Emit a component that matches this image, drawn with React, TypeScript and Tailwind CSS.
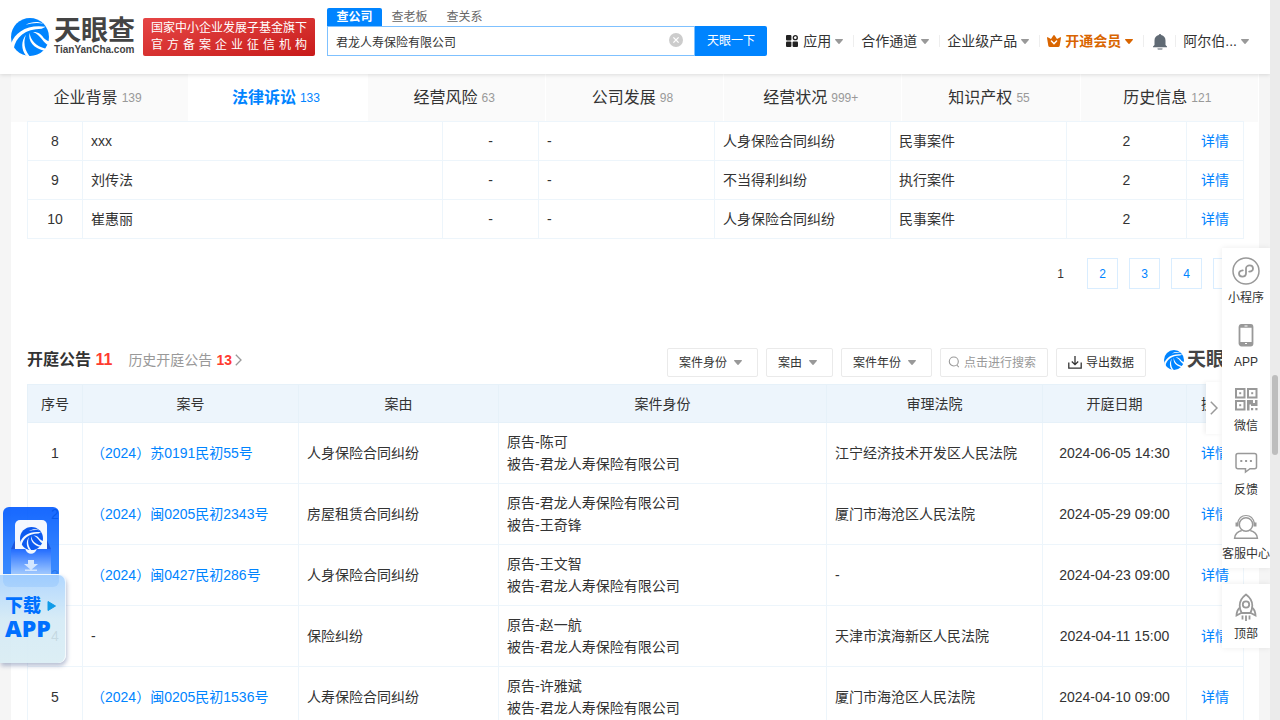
import type { ReactNode } from 'react';

import clsx from 'clsx';

const navTabs = [
  { label: '企业背景', count: '139' },
  { label: '法律诉讼', count: '133', active: true },
  { label: '经营风险', count: '63' },
  { label: '公司发展', count: '98' },
  { label: '经营状况', count: '999+' },
  { label: '知识产权', count: '55' },
  { label: '历史信息', count: '121' }
];

const caseRows = [
  { no: 8, name: 'xxx', reason: '人身保险合同纠纷', type: '民事案件', total: 2 },
  { no: 9, name: '刘传法', reason: '不当得利纠纷', type: '执行案件', total: 2 },
  { no: 10, name: '崔惠丽', reason: '人身保险合同纠纷', type: '民事案件', total: 2 }
];

const hearingHeads = ['序号', '案号', '案由', '案件身份', '审理法院', '开庭日期', '操作'];

const hearingRows = [
  {
    no: 1,
    caseNo: '（2024）苏0191民初55号',
    reason: '人身保险合同纠纷',
    parties: ['原告-陈可', '被告-君龙人寿保险有限公司'],
    court: '江宁经济技术开发区人民法院',
    date: '2024-06-05 14:30'
  },
  {
    no: 2,
    caseNo: '（2024）闽0205民初2343号',
    reason: '房屋租赁合同纠纷',
    parties: ['原告-君龙人寿保险有限公司', '被告-王奇锋'],
    court: '厦门市海沧区人民法院',
    date: '2024-05-29 09:00'
  },
  {
    no: 3,
    caseNo: '（2024）闽0427民初286号',
    reason: '人身保险合同纠纷',
    parties: ['原告-王文智', '被告-君龙人寿保险有限公司'],
    court: '-',
    date: '2024-04-23 09:00'
  },
  {
    no: 4,
    caseNo: '',
    reason: '保险纠纷',
    parties: ['原告-赵一航', '被告-君龙人寿保险有限公司'],
    court: '天津市滨海新区人民法院',
    date: '2024-04-11 15:00'
  },
  {
    no: 5,
    caseNo: '（2024）闽0205民初1536号',
    reason: '人寿保险合同纠纷',
    parties: ['原告-许雅斌', '被告-君龙人寿保险有限公司'],
    court: '厦门市海沧区人民法院',
    date: '2024-04-10 09:00'
  }
];

function Swirl({ className, disc = '#0084ff', streak = '#fff' }: { className?: string; disc?: string; streak?: string }) {
  return (
    <svg viewBox="0 0 114 114" className={className} aria-hidden="true">
      <circle cx="57" cy="57" r="57" fill={disc} />
      <g fill={streak}>
        <path d="M44 20C62 10 82 9 97 17C80 14 62 15 44 20Z" />
        <path d="M8 92C14 58 42 32 92 32L104 26C50 18 12 42 1 76Z" />
        <path d="M66 42C84 42 92 50 98 60C104 66 110 69 118 71L116 82C98 80 90 50 66 42Z" />
        <path d="M56 44C58 66 74 84 104 92L99 98C68 90 50 70 56 44Z" />
        <path d="M45 50C36 72 40 96 56 115L45 113C30 96 30 68 45 50Z" />
      </g>
    </svg>
  );
}

function Caret({ className }: { className?: string }) {
  return (
    <svg viewBox="0 0 8 5" className={clsx('h-[5px] w-2 flex-none', className)} fill="currentColor" aria-hidden="true">
      <path d="M.6 0h6.8c.5 0 .8.5.4.9L4.5 4.7a.7.7 0 0 1-1 0L.2.9C-.2.5.1 0 .6 0Z" />
    </svg>
  );
}

function NavItem({ children, last }: { children: ReactNode; last?: boolean }) {
  return (
    <li className="flex items-center">
      <a href="#" className="flex items-center gap-1 pl-[7px] whitespace-nowrap">
        {children}
      </a>
      {last ? null : <span className="ml-[10px] h-3 w-px bg-[#eee]" />}
    </li>
  );
}

function Header() {
  return (
    <header className="relative z-20 flex h-[74px] flex-none justify-between bg-white pr-[21px] pl-[11px] shadow-[0_1px_4px_rgba(0,0,0,0.12)]">
      <div className="flex">
        <a href="#" className="flex items-start gap-[5px] pt-[18px]">
          <Swirl className="h-[38px] w-[38px]" />
          <span className="block w-20 text-[#444]">
            <span className="block text-[27px] leading-[26px] font-bold whitespace-nowrap">天眼查</span>
            <span className="block text-[10px] leading-3 font-bold">TianYanCha.com</span>
          </span>
        </a>
        <div className="mt-[18px] ml-[9px] h-[38px] w-[172px] rounded-xs bg-linear-to-br from-[#e64545] to-[#c81919] px-2 pt-[2px] text-xs leading-[17px] whitespace-nowrap text-white">
          <p>国家中小企业发展子基金旗下</p>
          <p className="[text-align-last:justify]">官 方 备 案 企 业 征 信 机 构</p>
        </div>
        <form className="ml-3 pt-2 text-xs" onSubmit={(event) => event.preventDefault()}>
          <div className="flex h-[18px] leading-[18px] text-[#666]">
            <button type="button" className="w-[55px] rounded-t-xs bg-[#0084ff] font-bold text-white">
              查公司
            </button>
            <button type="button" className="w-[55px]">
              查老板
            </button>
            <button type="button" className="w-[55px]">
              查关系
            </button>
          </div>
          <div className="flex h-[30px]">
            <div className="relative w-[368px]">
              <input
                aria-label="查公司"
                defaultValue="君龙人寿保险有限公司"
                className="h-full w-full border border-[#7fc1ff] pr-8 pl-2 text-[#333] outline-none"
              />
              <svg viewBox="0 0 14 14" className="absolute top-[7px] right-3 h-[14px] w-[14px]" aria-hidden="true">
                <circle cx="7" cy="7" r="7" fill="#ccc" />
                <path d="m4.4 4.4 5.2 5.2m0-5.2L4.4 9.6" stroke="#fff" strokeWidth="1.3" />
              </svg>
            </div>
            <button type="submit" className="w-[72px] rounded-r-xs bg-[#0084ff] text-white">
              天眼一下
            </button>
          </div>
        </form>
      </div>

      <nav className="flex pt-2 text-sm text-[#333]">
        <ul className="flex items-center">
          <NavItem>
            <svg viewBox="0 0 12 12" className="mr-px h-3 w-3" fill="#222" aria-hidden="true">
              <rect width="5.4" height="5.4" rx="1" />
              <rect y="6.6" width="5.4" height="5.4" rx="1" />
              <rect x="6.6" y="6.6" width="5.4" height="5.4" rx="1" />
              <circle cx="9.3" cy="2.7" r="2" fill="none" stroke="#222" strokeWidth="1.3" />
            </svg>
            应用
            <Caret className="text-[#999]" />
          </NavItem>
          <NavItem>
            合作通道
            <Caret className="text-[#999]" />
          </NavItem>
          <NavItem>
            企业级产品
            <Caret className="text-[#999]" />
          </NavItem>
          <NavItem>
            <svg viewBox="0 0 14 12" className="h-3 w-[14px]" aria-hidden="true">
              <path
                d="M.8 2.2 4 4 6.3.5a.8.8 0 0 1 1.4 0L10 4l3.2-1.8c.5-.2.9.1.8.6l-1.3 8c-.1.7-.6 1.2-1.3 1.2H2.6c-.7 0-1.2-.5-1.3-1.2l-1.3-8c-.1-.5.3-.8.8-.6Z"
                fill="#d96500"
              />
              <path d="M4.4 6 7 8.8 9.6 6" fill="none" stroke="#fff" strokeWidth="1.4" strokeLinecap="round" />
            </svg>
            <span className="font-bold text-[#d96500]">开通会员</span>
            <Caret className="text-[#d96500]" />
          </NavItem>
          <NavItem>
            <svg viewBox="0 0 14 16" className="mt-px mr-[-2px] ml-[2px] h-4 w-[14px]" fill="#606a74" aria-hidden="true">
              <path d="M7 0c.7 0 1.1.4 1.2 1C11 1.6 12.5 3.6 12.5 6.5v4.5l1.5 1.500v.7H0v-.7L1.500 11V6.500C1.500 3.600 3 1.600 5.800 1 5.900.4 6.300 0 7 0Z" />
              <path d="M4.5 14.3h5v.7c0 .4-.3.7-.7.7H5.2a.7.7 0 0 1-.7-.7Z" opacity=".7" />
            </svg>
          </NavItem>
          <NavItem last>
            阿尔伯...
            <Caret className="text-[#999]" />
          </NavItem>
        </ul>
      </nav>
    </header>
  );
}

function Tabs() {
  return (
    <nav className="flex h-12 flex-none bg-[#fafafa]">
      {navTabs.map((tab) => (
        <a
          key={tab.label}
          href="#"
          className={clsx(
            'flex flex-1 items-center justify-center gap-1 border-r border-white pr-1 text-base',
            tab.active ? 'bg-white font-bold text-[#0084ff]' : 'text-[#333]'
          )}
        >
          {tab.label}
          <span className={clsx('text-xs font-normal', tab.active ? 'text-[#0084ff]' : 'text-[#999]')}>{tab.count}</span>
        </a>
      ))}
    </nav>
  );
}

function Cell({ children, center }: { children: ReactNode; center?: boolean }) {
  return <td className={clsx('border border-[#edf5fb] px-2 py-2', center && 'text-center')}>{children}</td>;
}

function DetailLink() {
  return (
    <a href="#" className="text-[#0084ff]">
      详情
    </a>
  );
}

function CaseTable() {
  return (
    <table className="-mt-px w-full table-fixed border-collapse text-sm leading-[22px]">
      <colgroup>
        <col className="w-[55px]" />
        <col />
        <col className="w-24" />
        <col className="w-44" />
        <col className="w-44" />
        <col className="w-44" />
        <col className="w-[120px]" />
        <col className="w-[57px]" />
      </colgroup>
      <tbody>
        {caseRows.map((row) => (
          <tr key={row.no}>
            <Cell center>{row.no}</Cell>
            <Cell>{row.name}</Cell>
            <Cell center>-</Cell>
            <Cell>-</Cell>
            <Cell>{row.reason}</Cell>
            <Cell>{row.type}</Cell>
            <Cell center>{row.total}</Cell>
            <Cell center>
              <DetailLink />
            </Cell>
          </tr>
        ))}
      </tbody>
    </table>
  );
}

function Pager() {
  return (
    <div className="mt-[19px] flex justify-end gap-[11px] text-xs">
      <span className="flex h-[31px] w-[31px] items-center justify-center">1</span>
      {[2, 3, 4, 5].map((page) => (
        <button key={page} type="button" className="h-[31px] w-[31px] border border-[#d9edff] text-[#0084ff]">
          {page}
        </button>
      ))}
    </div>
  );
}

function FilterSelect({ label }: { label: string }) {
  return (
    <div className="relative">
      <select
        aria-label={label}
        className="block h-[29px] appearance-none rounded-xs border border-[#eaeaea] bg-white pr-[29px] pl-[11px] text-xs text-[#333]"
      >
        <option>{label}</option>
      </select>
      <Caret className="pointer-events-none absolute top-3 right-4 text-[#999]" />
    </div>
  );
}

function SectionBar() {
  return (
    <div className="mt-[59px] flex items-start justify-between whitespace-nowrap">
      <div className="flex items-center">
        <h2 className="text-base font-bold">
          开庭公告 <span className="text-[#ff3b30]">11</span>
        </h2>
        <a href="#" className="ml-4 flex items-center text-sm text-[#999]">
          历史开庭公告
          <span className="ml-1 font-bold text-[#ff3b30]">13</span>
          <svg viewBox="0 0 7 12" className="ml-[3px] h-3 w-[7px]" fill="none" stroke="#999" strokeWidth="1.3" aria-hidden="true">
            <path d="m.8.8 5.2 5.2L.8 11.2" />
          </svg>
        </a>
      </div>
      <div className="flex items-center gap-2 text-xs">
        <FilterSelect label="案件身份" />
        <FilterSelect label="案由" />
        <FilterSelect label="案件年份" />
        <div className="relative">
          <input
            aria-label="点击进行搜索"
            placeholder="点击进行搜索"
            className="block h-[29px] w-[108px] rounded-xs border border-[#eaeaea] pr-1 pl-[23px] outline-none placeholder:text-[#999]"
          />
          <svg viewBox="0 0 12 12" className="absolute top-2 left-2 h-3 w-3" fill="none" stroke="#999" strokeWidth="1.1" aria-hidden="true">
            <circle cx="5.8" cy="5.5" r="4.5" />
            <path d="m8.8 9 2 2.2" />
          </svg>
        </div>
        <button type="button" className="flex h-[29px] items-center gap-1 rounded-xs border border-[#eaeaea] px-[11px] text-[#333]">
          <svg viewBox="0 0 14 13" className="h-[13px] w-[14px]" fill="none" stroke="#333" strokeWidth="1.3" aria-hidden="true">
            <path d="M.8 6.5v5.7h12.400V6.500M7 0v8.500M3.800 5.500 7 8.700l3.200-3.200" />
          </svg>
          导出数据
        </button>
        <span className="ml-[10px] flex h-6 items-center gap-[3px] self-start text-[19px] leading-6 font-bold text-[#444]">
          <Swirl className="h-5 w-5" />
          天眼查
        </span>
      </div>
    </div>
  );
}

function HearingTable() {
  return (
    <table className="mt-[7px] w-full table-fixed border-collapse text-sm leading-[22px]">
      <colgroup>
        <col className="w-[55px]" />
        <col className="w-[216px]" />
        <col className="w-[200px]" />
        <col />
        <col className="w-[216px]" />
        <col className="w-36" />
        <col className="w-[57px]" />
      </colgroup>
      <thead>
        <tr className="bg-[#edf5fc]">
          {hearingHeads.map((head) => (
            <th key={head} className="border border-[#e6f1f9] px-2 pt-2 pb-[7px] font-normal">
              {head}
            </th>
          ))}
        </tr>
      </thead>
      <tbody>
        {hearingRows.map((row) => (
          <tr key={row.no}>
            <Cell center>{row.no}</Cell>
            <Cell>
              {row.caseNo ? (
                <a href="#" className="text-[#0084ff]">
                  {row.caseNo}
                </a>
              ) : (
                '-'
              )}
            </Cell>
            <Cell>{row.reason}</Cell>
            <Cell>
              {row.parties.map((party) => (
                <div key={party}>{party}</div>
              ))}
            </Cell>
            <Cell>{row.court}</Cell>
            <Cell center>{row.date}</Cell>
            <Cell center>
              <DetailLink />
            </Cell>
          </tr>
        ))}
      </tbody>
    </table>
  );
}

function ToolItem({ label, children }: { label: string; children: ReactNode }) {
  return (
    <a href="#" className="flex h-16 flex-col items-center pt-[9px] text-xs text-[#333]">
      <svg viewBox="0 0 28 28" className="h-7 w-7 flex-none" fill="none" stroke="#999" strokeWidth="1.5" aria-hidden="true">
        {children}
      </svg>
      <span className="mt-[5px] leading-4 whitespace-nowrap">{label}</span>
    </a>
  );
}

function Toolbar() {
  return (
    <aside className="absolute top-[248px] right-[10px] z-10 w-12">
      <button
        type="button"
        aria-label="收起"
        className="absolute top-[134px] right-full flex h-[52px] w-4 items-center justify-center bg-white shadow-[-2px_0_4px_rgba(0,0,0,0.06)]"
      >
        <svg viewBox="0 0 8 14" className="h-[14px] w-2" fill="none" stroke="#999" strokeWidth="1.5" aria-hidden="true">
          <path d="m.8.8 6.2 6.2-6.2 6.2" />
        </svg>
      </button>
      <div className="relative bg-white shadow-[0_0_6px_rgba(0,0,0,0.08)]">
        <ToolItem label="小程序">
          <circle cx="14" cy="14" r="13" />
          <path
            d="M10.8 13.4c-2.300.2-3.800 1.500-3.800 3.200 0 1.700 1.500 3 3.300 3 2.100 0 3.700-1.400 3.700-3.300v-4.600c0-1.900 1.600-3.300 3.700-3.300 1.800 0 3.300 1.300 3.300 3 0 1.700-1.500 3-3.800 3.200"
            strokeWidth="1.8"
            strokeLinecap="round"
          />
        </ToolItem>
        <ToolItem label="APP">
          <rect x="7.5" y="4" width="13" height="20.5" rx="2" strokeWidth="1.8" />
          <path d="M7.5 5.2h13M7.5 22.500h13" strokeWidth="3" />
          <path d="M12.500 5h3M13 22.500h2" stroke="#fff" strokeWidth="1.2" />
        </ToolItem>
        <ToolItem label="微信">
          <g strokeWidth="2">
            <rect x="4" y="4" width="8.5" height="8.5" />
            <rect x="16" y="4" width="8.5" height="8.5" />
            <rect x="4" y="16" width="8.5" height="8.5" />
          </g>
          <g fill="#999" stroke="none">
            <rect x="7.2" y="7.2" width="2" height="2" />
            <rect x="19.2" y="7.2" width="2" height="2" />
            <rect x="7.2" y="19.2" width="2" height="2" />
            <path d="M15 15h6v3h2v-3h2.500v6H19v-1.500h-1.500v6H15ZM19 23h2.200v2.200H19ZM23.300 23h2.200v2.200h-2.200Z" />
          </g>
        </ToolItem>
        <ToolItem label="反馈">
          <path d="M6 4.500h16.500c1.200 0 2 .8 2 2v11.200c0 1.200-.8 2-2 2H18l-4.500 3.300v-3.300H6c-1.200 0-2-.8-2-2V6.500c0-1.200.8-2 2-2Z" />
          <path d="M8.300 12h2M13.100 12h2M17.900 12h2" strokeWidth="2" />
        </ToolItem>
        <ToolItem label="客服中心">
          <circle cx="14" cy="11.500" r="6.700" />
          <path d="M5.500 10.500C6.500 5.500 9.800 2.500 14 2.500s7.500 3 8.500 8" strokeWidth="1.2" />
          <path d="M5 9.500v4M23 9.500v4" strokeWidth="3" />
          <path d="M9.800 17.500C5.500 18.500 3 21 2.600 25.200h22.800c-.4-4.200-2.900-6.700-7.200-7.700" />
        </ToolItem>
      </div>
      <div className="relative mt-4 bg-white shadow-[0_0_6px_rgba(0,0,0,0.08)]">
        <ToolItem label="顶部">
          <path
            d="M14 1.500c3.800 2.800 6.300 6.600 6.300 11 0 2.800-.8 5.500-2 7.500H9.700c-1.200-2-2-4.700-2-7.500 0-4.400 2.500-8.200 6.300-11Z"
            strokeWidth="1.8"
          />
          <circle cx="14" cy="11.500" r="3.200" strokeWidth="1.800" />
          <path
            d="M7.900 14.500c-2 1.700-3.200 4-3.400 8l4.700-2.500M20.100 14.500c2 1.700 3.200 4 3.400 8l-4.700-2.500M10.500 22.500v4M14 22.500V28M17.500 22.500v4"
            strokeWidth="1.8"
          />
        </ToolItem>
      </div>
    </aside>
  );
}

function DownloadCard() {
  return (
    <a href="#" className="absolute top-[507px] left-0 z-10 block h-[158px] w-[66px]">
      <div className="ml-[3px] h-[80px] w-14 rounded-md bg-linear-to-b from-[#0058ff] to-[#2e86ff] opacity-90">
        <svg viewBox="0 0 56 68" className="h-[68px] w-14" aria-hidden="true">
          <defs>
            <linearGradient id="pocket" x1="0" y1="0" x2="0" y2="1">
              <stop offset="0" stopColor="#0a5cff" />
              <stop offset="1" stopColor="#9cc8ff" />
            </linearGradient>
          </defs>
          <path d="M8 42 13 31h30l5 11Z" fill="#0645d8" />
          <path d="M17 13h22a5 5 0 0 1 5 5v24H12V18a5 5 0 0 1 5-5Z" fill="#f3f8ff" />
          <path d="M8 42h40v26H8Z" fill="url(#pocket)" />
          <path d="M22 41.500c2 7 10 7 12 0Z" fill="#f3f8ff" />
          <path d="M25 53h6v4h4l-7 6-7-6h4ZM22 62.500h12v1.500H22Z" fill="#cfe4ff" />
        </svg>
      </div>
      <Swirl className="absolute top-5 left-5 h-[23px] w-[23px]" disc="#0d5af0" streak="#f3f8ff" />
      <div className="absolute inset-x-0 bottom-[2px] h-[89px] rounded-r-lg border-t border-r border-white/70 bg-linear-to-b from-[#a9d3ff]/90 via-[#d3eaf6]/90 to-[#d9edf4]/90 pt-5 pl-[5px] font-black text-[#0070ff] shadow-[1px_3px_4px_rgba(80,100,150,0.4)]">
        <span className="flex items-center gap-[6px] text-lg leading-[22px] whitespace-nowrap">
          下载
          <svg viewBox="0 0 9 10" className="h-[10px] w-[9px]" aria-hidden="true">
            <path d="M1 .5 8.500 5 1 9.500Z" fill="#109be8" stroke="#109be8" strokeLinejoin="round" />
          </svg>
        </span>
        <span className="block font-['Open_Sans'] text-[23px] leading-[22px] font-extrabold">APP</span>
      </div>
    </a>
  );
}

export default function App() {
  return (
    <div className="relative flex h-screen overflow-hidden bg-[#f5f5f5] font-['Liberation_Sans','Noto_Sans_CJK_SC',sans-serif] text-[#333]">
      <div className="flex min-w-0 flex-1 flex-col">
        <Header />
        <main className="mx-[11px] flex min-h-0 flex-1 flex-col overflow-hidden bg-white">
          <Tabs />
          <div className="pr-[15px] pl-4">
            <CaseTable />
            <Pager />
            <SectionBar />
            <HearingTable />
          </div>
        </main>
      </div>
      <Toolbar />
      <DownloadCard />
      <div className="relative z-30 w-[10px] flex-none bg-[#ebebeb]">
        <div className="absolute top-[375px] left-[2px] h-20 w-[6px] rounded-full bg-[#bdbdbd]" />
      </div>
    </div>
  );
}
